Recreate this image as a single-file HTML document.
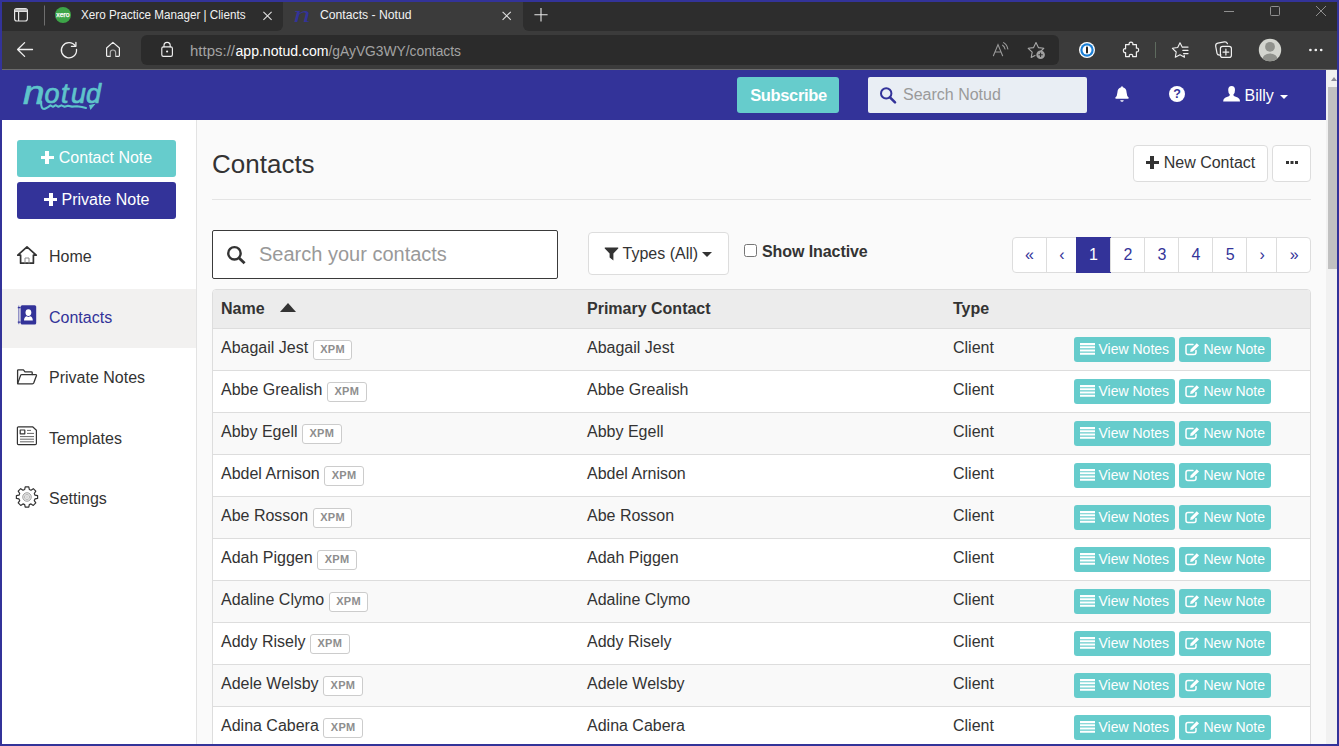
<!DOCTYPE html>
<html lang="en">
<head>
<meta charset="utf-8">
<title>Contacts - Notud</title>
<style>
*{box-sizing:border-box}
html,body{margin:0;padding:0}
body{width:1339px;height:746px;overflow:hidden;position:relative;background:#fafafa;font-family:"Liberation Sans",Arial,sans-serif;font-size:16px;color:#333;line-height:1.428571}
.abs{position:absolute}
svg{display:block;overflow:visible}
/* browser chrome */
#tabbar{left:0;top:0;width:1339px;height:31px;background:#3b3b3b}
.tabdark{top:0;height:30.5px;background:#2d2d2d}
#toolbar{left:0;top:31px;width:1339px;height:39px;background:#3b3b3b;border-bottom:1px solid #6b6b6b}
#urlbar{left:141px;top:35px;width:918px;height:30px;background:#2b2b2b;border-radius:6px}
.chrome-txt{font-family:"Liberation Sans",Arial,sans-serif;color:#fff;white-space:nowrap}
.plus{display:inline-block;position:relative;width:13px;height:13px;margin-right:5px;top:1px}
.plus:before,.plus:after{content:"";position:absolute;background:currentColor}
.plus:before{left:0;top:4.7px;width:13px;height:3.6px}
.plus:after{left:4.7px;top:0;width:3.6px;height:13px}
/* app */
#navbar{left:0;top:70px;width:1326px;height:50px;background:#333399}
#sidebar{left:0;top:120px;width:197px;height:626px;background:#fff;border-right:1px solid #e3e3e3}
#scroll{left:1326px;top:70px;width:13px;height:676px;background:#f1f1f1}
#thumb{left:1328px;top:87px;width:9px;height:182px;background:#c1c1c1}
.btn{position:absolute;border-radius:4px;text-align:center;white-space:nowrap}
.nav-item{position:absolute;left:49px;white-space:nowrap;font-size:16px;line-height:20px;color:#333}
.row{position:absolute;left:213px;width:1097px;height:42px;border-top:1px solid #ddd}
.row.odd{background:#f9f9f9}
.row.even{background:#fff}
.row span{position:absolute;white-space:nowrap;line-height:20px}
.c1{left:8px;top:9px}
.c2{left:374px;top:9px}
.c3{left:740px;top:9px}
.xpm{display:inline-block;font-style:normal;position:relative;top:1px;margin-left:4.6px;border:1px solid #ccc;border-radius:3px;background:#fff;color:#8e8e8e;font-size:11px;font-weight:bold;line-height:14px;padding:1px 6.4px 3px 6.4px;vertical-align:middle;letter-spacing:.3px}
.vb{position:absolute;top:8px;height:25px;background:#66cccc;border-radius:3px;color:#fff;font-size:14px;line-height:25px}
.vb i{position:absolute}
.vb b{position:absolute;font-weight:normal}
#frame{left:0;top:0;width:1339px;height:746px;box-shadow:inset 0 0 0 2px #333399;pointer-events:none;z-index:99}
</style>
</head>
<body>
<!-- BROWSER CHROME -->
<div id="tabbar" class="abs"></div>
<div class="abs tabdark" style="left:0;width:282.5px;border-bottom-right-radius:6px"></div><div class="abs tabdark" style="left:523px;width:816px;border-bottom-left-radius:6px"></div>
<div id="toolbar" class="abs"></div>
<div id="urlbar" class="abs"></div>
<svg class="abs" style="left:0;top:0" width="1339" height="70" viewBox="0 0 1339 70" font-family="Liberation Sans, Arial, sans-serif">
<!-- active tab flares -->
<!-- tab actions icon -->
<g fill="none" stroke="#e6e6e6" stroke-width="1.2">
<rect x="14.6" y="8.6" width="12.8" height="12.4" rx="2.2"/>
<path d="M18.6 11.5V21M14.6 11.4H27.4" />
</g>
<rect x="15" y="9" width="12" height="2.2" fill="#bdbdbd"/>
<path d="M44.5 5.5V25.5" stroke="#6e6e6e" stroke-width="1"/>
<!-- xero favicon -->
<circle cx="63" cy="15" r="8" fill="#3da548"/>
<text x="63" y="17.1" font-size="6.6" fill="#fff" stroke="#fff" stroke-width="0.25" text-anchor="middle" textLength="13.4" lengthAdjust="spacingAndGlyphs">xero</text>
<text x="81" y="19" font-size="12" fill="#f2f2f2" textLength="164.5" lengthAdjust="spacingAndGlyphs">Xero Practice Manager | Clients</text>
<path d="M263.4 11.8L271.6 19.8M271.6 11.8L263.4 19.8" stroke="#e0e0e0" stroke-width="1.1" fill="none"/>
<!-- active tab -->
<text x="293.5" y="21.8" font-size="24" font-style="italic" font-family="Liberation Serif, serif" fill="#333399" textLength="17" lengthAdjust="spacingAndGlyphs">n</text>
<text x="320" y="19" font-size="12" fill="#f2f2f2" textLength="91.5" lengthAdjust="spacingAndGlyphs">Contacts - Notud</text>
<path d="M502.6 11.8L510.8 19.8M510.8 11.8L502.6 19.8" stroke="#e0e0e0" stroke-width="1.1" fill="none"/>
<path d="M541 8V21.4M534.4 14.7H547.6" stroke="#e6e6e6" stroke-width="1.1" fill="none"/>
<!-- window controls -->
<g stroke="#8f8f8f" stroke-width="1" fill="none">
<path d="M1224 11.5H1234"/>
<rect x="1270.5" y="6.5" width="9" height="9" rx="1"/>
<path d="M1316 6L1326 16M1326 6L1316 16"/>
</g>
<!-- toolbar icons -->
<g stroke="#f0f0f0" stroke-width="1.3" fill="none" stroke-linecap="round" stroke-linejoin="round">
<path d="M32.5 49.5H17.8M24.6 42.6L17.6 49.5L24.6 56.4"/>
<path d="M76.5 49.3A7.6 7.6 0 1 1 75.3 46"/>
<path d="M75.9 42.4V46.3H71.4" />
<path d="M110.3 56.3H107.4Q106.6 56.3 106.6 55.5V48L112.9 42.4L119.4 48V55.5Q119.4 56.3 118.6 56.3H115.6" stroke-width="1.2"/><path d="M115.6 56.3V52.4Q115.6 50 112.95 50Q110.3 50 110.3 52.4V56.3" stroke="#b0b0b0" stroke-width="1.2"/>
<rect x="161.8" y="46.8" width="10.6" height="9.6" rx="1.6" stroke-width="1.15"/>
<path d="M164 46.8V45.4A3.1 3.1 0 0 1 170.2 45.4V46.8" stroke-width="1.15"/>
</g>
<circle cx="167.1" cy="51.5" r="1.1" fill="#f0f0f0"/>
<!-- url -->
<text y="55.5" font-size="14">
<tspan x="190" fill="#a3a3a3" textLength="45" lengthAdjust="spacingAndGlyphs">https://</tspan><tspan x="235.5" fill="#ffffff" textLength="93" lengthAdjust="spacingAndGlyphs">app.notud.com</tspan><tspan x="328.5" fill="#a3a3a3" textLength="132.5" lengthAdjust="spacingAndGlyphs">/gAyVG3WY/contacts</tspan>
</text>
<!-- read aloud -->
<g stroke="#9a9a9a" stroke-width="1.1" fill="none" stroke-linecap="round">
<path d="M993.4 55.8L998 44.6L1002.6 55.8M995 52H1001"/>
<path d="M1002.6 45.2Q1004.6 46.6 1005 49M1003.6 42.6Q1007.2 44.8 1007.8 49"/>
</g>
<!-- add favourite -->
<path d="M1036 42.6L1038.4 47.6L1043.8 48.3L1040 52L1040.6 54M1036 42.6L1033.6 47.6L1028.2 48.3L1032.2 52.2L1031.2 57.4L1035 55.4" stroke="#a8a8a8" stroke-width="1.1" fill="none" stroke-linejoin="round" stroke-linecap="round"/>
<circle cx="1040.6" cy="54.8" r="4.3" fill="#a0a0a0"/>
<path d="M1040.6 52.6V57M1038.4 54.8H1042.8" stroke="#2b2b2b" stroke-width="1"/>
<!-- 1password -->
<circle cx="1087" cy="50" r="8" fill="#fff"/>
<circle cx="1087" cy="50" r="6.7" fill="#1a7fd6"/>
<circle cx="1087" cy="50" r="4.5" fill="#fff"/>
<rect x="1086" y="46.6" width="2" height="6.8" rx="0.8" fill="#222"/>
<!-- puzzle -->
<path d="M1125.6 44.6H1129.2Q1128.6 42.2 1131 42.2Q1133.4 42.2 1132.8 44.6H1136.4V48.2Q1138.6 47.6 1138.6 50Q1138.6 52.4 1136.4 51.8V56.6H1132.6Q1133.2 54.4 1131 54.4Q1128.8 54.4 1129.4 56.6H1125.6V52.6Q1123.4 53 1123.4 50.6Q1123.4 48.2 1125.6 48.8Z" stroke="#f0f0f0" stroke-width="1.2" fill="none" stroke-linejoin="round"/>
<path d="M1155.5 42V58" stroke="#5e6b5e" stroke-width="1"/>
<!-- favourites list -->
<g stroke="#f0f0f0" stroke-width="1.2" fill="none" stroke-linejoin="round" stroke-linecap="round">
<path d="M1182.3 47.3L1180 42.8L1177.7 47.5L1172.4 48.3L1176.2 52L1175.3 57.3L1180 54.8L1184.5 57.2L1184.1 55.2" stroke-width="1.1"/>
<path d="M1182.8 47.1H1188M1182.8 50.3H1188M1183.6 53.5H1188" stroke-width="1.25"/>
<!-- collections -->
<path d="M1220 54.6H1219.2Q1216.6 54.6 1216.4 52.4L1216.2 45.4Q1216.2 42.8 1218.8 42.6L1225.4 42.4Q1227.8 42.4 1228.2 44.6" transform="rotate(-9 1222 49)"/>
<rect x="1220.4" y="46.4" width="11" height="11" rx="2.2"/>
<path d="M1225.9 49.2V55M1223 52.1H1228.8"/>
</g>
<!-- avatar -->
<clipPath id="avc"><circle cx="1270" cy="50" r="11.2"/></clipPath>
<circle cx="1270" cy="50" r="11.2" fill="#d3d5cf"/>
<circle cx="1270" cy="46.8" r="4.9" fill="#90928d"/>
<ellipse cx="1270" cy="60" rx="7.8" ry="6.6" fill="#90928d" clip-path="url(#avc)"/>
<g fill="#f0f0f0"><circle cx="1310.4" cy="50" r="1.35"/><circle cx="1315.8" cy="50" r="1.35"/><circle cx="1321.2" cy="50" r="1.35"/></g>
</svg>

<!-- APP -->
<div id="navbar" class="abs"></div>
<svg class="abs" style="left:0;top:70px" width="1326" height="50" viewBox="0 70 1326 50" font-family="Liberation Sans, Arial, sans-serif">
<!-- logo -->
<text y="102.5" font-size="27" font-style="italic" fill="#5fc4cb" stroke="#5fc4cb" stroke-width="0.7" stroke-linejoin="round"><tspan x="23" y="104" font-size="33" textLength="21.5" lengthAdjust="spacingAndGlyphs">n</tspan><tspan x="44.5 61 71 86" y="102.5">otud</tspan></text>
<path d="M41.2 101.5Q40.6 109.8 45 108.8Q47.6 107.6 50.5 105.4L53 106.8L55.6 105.2L58.4 106.8L61.4 105.4L64.6 106.8L68 105.8L72 106.6L77 106.2L82 107L86 108" stroke="#5fc4cb" stroke-width="2.1" fill="none" stroke-linecap="round" stroke-linejoin="round"/>
<path d="M89 105L95.6 103.8L90.4 110Z" fill="#5fc4cb"/>
<!-- search icon -->
</svg>
<div class="btn" style="left:737px;top:77px;width:102px;height:36px;background:#66cccc;color:#fff;font-weight:bold;font-size:16.5px;line-height:36px;letter-spacing:-.35px;padding-left:1px;border-radius:3px">Subscribe</div>
<div class="abs" style="left:868px;top:77px;width:219px;height:36px;background:#e9eef4;border-radius:2px"></div>
<svg class="abs" style="left:879px;top:85.8px" width="18" height="18" viewBox="0 0 18 18"><circle cx="7.2" cy="7.4" r="5.2" fill="none" stroke="#333399" stroke-width="2"/><path d="M11 11.4L16 16.4" stroke="#333399" stroke-width="2.6" stroke-linecap="round"/></svg>
<div class="abs" style="left:903px;top:84px;font-size:16px;line-height:22px;color:#9a9a9a;white-space:nowrap">Search Notud</div>
<!-- bell -->
<svg class="abs" style="left:1113px;top:85px" width="18" height="18" viewBox="0 0 18 18"><path d="M9 1.2Q9.9 1.2 9.9 2.2Q13.4 3 13.6 7.4Q13.8 11.2 15.8 12.8Q15.8 13.8 14.8 13.8H3.2Q2.2 13.8 2.2 12.8Q4.2 11.2 4.4 7.4Q4.6 3 8.1 2.2Q8.1 1.2 9 1.2Z" fill="#fff"/><path d="M7.2 15.2H10.8Q10.4 16.8 9 16.8Q7.6 16.8 7.2 15.2Z" fill="#fff"/></svg>
<!-- help -->
<svg class="abs" style="left:1168px;top:85px" width="18" height="18" viewBox="0 0 18 18"><circle cx="9" cy="9" r="8" fill="#fff"/><text x="9" y="13.4" font-size="12.5" font-weight="bold" font-family="Liberation Sans, Arial, sans-serif" text-anchor="middle" fill="#333399">?</text></svg>
<!-- user -->
<svg class="abs" style="left:1223px;top:85px" width="18" height="18" viewBox="0 0 18 18"><path d="M8.6 1Q12 1 12 5Q12 8.2 10.4 9.6Q10.2 10.8 11.4 11.3Q15.4 12.6 16.4 14Q17 15.2 17 16.6H0.2Q0.2 15.2 0.8 14Q1.8 12.6 5.8 11.3Q7 10.8 6.8 9.6Q5.2 8.2 5.2 5Q5.2 1 8.6 1Z" fill="#fff"/></svg>
<div class="abs" style="left:1244.5px;top:85px;font-size:16px;line-height:22px;color:#fff;white-space:nowrap">Billy</div>
<div class="abs" style="left:1280px;top:95px;width:0;height:0;border-left:4px solid transparent;border-right:4px solid transparent;border-top:4px solid #fff"></div>

<div id="sidebar" class="abs"></div>
<div class="btn" style="left:17px;top:140px;width:159px;height:37px;background:#66cccc;color:#fff;font-size:16px;line-height:35px;border-radius:3px"><span class="plus"></span>Contact Note</div>
<div class="btn" style="left:17px;top:182px;width:159px;height:37px;background:#333399;color:#fff;font-size:16px;line-height:35px;border-radius:3px;padding-left:1px"><span class="plus" style="margin-right:4px"></span>Private Note</div>
<div class="abs" style="left:2px;top:289px;width:194px;height:59px;background:#f2f1f0"></div>
<!-- home icon -->
<svg class="abs" style="left:16px;top:245px" width="22" height="20" viewBox="0 0 22 20" fill="none" stroke="#333" stroke-width="1.7" stroke-linejoin="round" stroke-linecap="round"><path d="M1.8 10.2L11 1.8L20.2 10.2H17.4V18.2H4.6V10.2Z"/><path d="M9 18.2V13H13V18.2" stroke="#8a8a8a" stroke-width="1"/></svg>
<div class="nav-item" style="top:247px">Home</div>
<!-- contacts icon -->
<svg class="abs" style="left:17px;top:304px" width="20" height="22" viewBox="0 0 20 22"><rect x="3.6" y="1.2" width="15.6" height="19.4" rx="1.6" fill="#333399"/><path d="M1.8 1.6V20.2" stroke="#6a6ab5" stroke-width="1"/><path d="M0.8 3.6H3.6M0.8 18.2H3.6" stroke="#333399" stroke-width="1.2"/><ellipse cx="11.4" cy="8.6" rx="2.9" ry="3.4" fill="#fff"/><path d="M7 16.6Q7 13 9.6 12.2L11.4 13L13.2 12.2Q15.8 13 15.8 16.6Z" fill="#fff"/></svg>
<div class="nav-item" style="top:308px;color:#333399">Contacts</div>
<!-- folder icon -->
<svg class="abs" style="left:16px;top:367.6px" width="22" height="18" viewBox="0 0 22 18" fill="none" stroke="#333" stroke-width="1.3" stroke-linejoin="round" stroke-linecap="round"><path d="M1.6 15.6V2.6Q1.6 1.8 2.4 1.8H7.4L9 3.8H15.4Q16.2 3.8 16.2 4.6V6.6"/><path d="M1.6 15.6L4.6 7.4Q4.9 6.6 5.8 6.6H19.6Q20.8 6.6 20.4 7.8L17.8 14.8Q17.4 15.8 16.4 15.8H2Q1.6 15.8 1.6 15.6Z"/></svg>
<div class="nav-item" style="top:368px">Private Notes</div>
<!-- templates icon -->
<svg class="abs" style="left:16px;top:425px" width="22" height="22" viewBox="0 0 22 22" fill="none" stroke="#333" stroke-width="1.2" stroke-linejoin="round"><path d="M2.4 1.8H16.6L20.4 5.2V18.4Q20.4 19.6 19.2 19.6H2.4Q1.4 19.6 1.4 18.4V2.8Q1.4 1.8 2.4 1.8Z"/><rect x="4.2" y="5" width="4.6" height="3.8"/><path d="M11 5.4H15M11 8.4H18M4 11.6H18M4 14.2H18M4 16.8H18" stroke-width="1" stroke="#666"/></svg>
<div class="nav-item" style="top:428.5px">Templates</div>
<!-- settings icon -->
<svg class="abs" style="left:16px;top:486px" width="22" height="22" viewBox="0 0 22 22" fill="none" stroke="#333" stroke-width="1.2" stroke-linejoin="round"><path d="M9.2 1.6H12.8L13.3 4.3L15 5L17.3 3.5L19.8 6L18.3 8.3L19 10L21.6 10.5V13.2L19 13.7L18.3 15.4L19.8 17.7L17.3 20.2L15 18.7L13.3 19.4L12.8 22H9.2L8.7 19.4L7 18.7L4.7 20.2L2.2 17.7L3.7 15.4L3 13.7L0.4 13.2V10.5L3 10L3.7 8.3L2.2 6L4.7 3.5L7 5L8.7 4.3Z" transform="translate(0 -0.8)"/><circle cx="11" cy="11" r="4.2" stroke="#777" stroke-width="0.8"/><circle cx="11" cy="11" r="2.6" stroke="#999" stroke-width="0.7"/><circle cx="11" cy="11" r="1.2" stroke="#aaa" stroke-width="0.6"/></svg>
<div class="nav-item" style="top:489px">Settings</div>

<div class="abs" style="left:212px;top:149px;font-size:26px;line-height:30px;color:#333;white-space:nowrap">Contacts</div>
<div class="btn" style="left:1133px;top:145px;width:135px;height:37px;background:#fff;border:1px solid #ddd;color:#333;font-size:16px;line-height:33px"><span class="plus" style="margin-right:5px"></span>New Contact</div>
<div class="btn" style="left:1272px;top:145px;width:39px;height:37px;background:#fff;border:1px solid #ddd"><i class="abs" style="left:13px;top:15px;width:3px;height:3px;background:#333;box-shadow:4.5px 0 0 #333,9px 0 0 #333"></i></div>
<div class="abs" style="left:212px;top:199px;width:1099px;height:1px;background:#e4e4e4"></div>
<div class="abs" style="left:212px;top:230px;width:346px;height:49px;background:#fff;border:1px solid #3a3a3a;border-radius:2px"></div>
<svg class="abs" style="left:226px;top:245px" width="20" height="20" viewBox="0 0 20 20"><circle cx="8.45" cy="8.35" r="6.2" fill="none" stroke="#333" stroke-width="2.4"/><path d="M12.8 12.8L18.6 18.2" stroke="#333" stroke-width="2.9"/></svg>
<div class="abs" style="left:259px;top:239.5px;font-size:20px;line-height:28px;color:#999;white-space:nowrap">Search your contacts</div>
<div class="btn" style="left:588px;top:232px;width:141px;height:43px;background:#fff;border:1px solid #ddd"></div>
<svg class="abs" style="left:604px;top:247px" width="15" height="14" viewBox="0 0 15 14"><path d="M1 0.6H14Q14.6 0.8 14.2 1.4L9.4 6.6V13.4L5.6 10.4V6.6L0.8 1.4Q0.4 0.8 1 0.6Z" fill="#333"/></svg>
<div class="abs" style="left:622.5px;top:243px;font-size:16px;line-height:22px;color:#333;white-space:nowrap">Types (All)</div>
<div class="abs" style="left:702px;top:252px;width:0;height:0;border-left:5px solid transparent;border-right:5px solid transparent;border-top:5px solid #333"></div>
<div class="abs" style="left:744px;top:244px;width:13px;height:13px;background:#fff;border:1px solid #767676;border-radius:2.5px"></div>
<div class="abs" style="left:762px;top:241px;letter-spacing:-.08px;font-size:16px;font-weight:bold;line-height:22px;color:#333;white-space:nowrap">Show Inactive</div>
<div class="abs" style="left:1012px;top:237px;width:299px;height:36px;background:#fff;border:1px solid #ddd;border-radius:4px"></div>
<div class="abs" style="left:1012px;top:238px;width:35px;height:34px;color:#333399;font-size:16px;line-height:34px;text-align:center">«</div>
<div class="abs" style="left:1046px;top:238px;width:31px;height:34px;border-left:1px solid #ddd;color:#333399;font-size:16px;line-height:34px;text-align:center">‹</div>
<div class="abs" style="left:1076px;top:237px;width:35px;height:36px;background:#333399;color:#fff;font-size:16px;line-height:36px;text-align:center">1</div>
<div class="abs" style="left:1110px;top:238px;width:35px;height:34px;border-left:1px solid #ddd;color:#333399;font-size:16px;line-height:34px;text-align:center">2</div>
<div class="abs" style="left:1144px;top:238px;width:35px;height:34px;border-left:1px solid #ddd;color:#333399;font-size:16px;line-height:34px;text-align:center">3</div>
<div class="abs" style="left:1178px;top:238px;width:35px;height:34px;border-left:1px solid #ddd;color:#333399;font-size:16px;line-height:34px;text-align:center">4</div>
<div class="abs" style="left:1212.3px;top:238px;width:35px;height:34px;border-left:1px solid #ddd;color:#333399;font-size:16px;line-height:34px;text-align:center">5</div>
<div class="abs" style="left:1246.2px;top:238px;width:31px;height:34px;border-left:1px solid #ddd;color:#333399;font-size:16px;line-height:34px;text-align:center">›</div>
<div class="abs" style="left:1276.3px;top:238px;width:34.7px;height:34px;border-left:1px solid #ddd;color:#333399;font-size:16px;line-height:34px;text-align:center">»</div>
<div class="abs" style="left:212px;top:289px;width:1099px;height:460px;border:1px solid #ddd;border-radius:4px 4px 0 0;background:#fff"></div>
<div class="abs" style="left:213px;top:290px;width:1097px;height:38px;background:#ececec;border-radius:3px 3px 0 0"></div>
<div class="abs" style="left:221px;top:298px;font-size:16px;font-weight:bold;line-height:22px;color:#333;white-space:nowrap">Name</div>
<div class="abs" style="left:587px;top:298px;font-size:16px;font-weight:bold;line-height:22px;color:#333;white-space:nowrap">Primary Contact</div>
<div class="abs" style="left:953px;top:298px;font-size:16px;font-weight:bold;line-height:22px;color:#333;white-space:nowrap">Type</div>
<div class="abs" style="left:279.5px;top:303px;width:0;height:0;border-left:8px solid transparent;border-right:8px solid transparent;border-bottom:9px solid #333"></div>
<div class="row odd" style="top:328px"><span class="c1">Abagail Jest<em class="xpm">XPM</em></span><span class="c2">Abagail Jest</span><span class="c3">Client</span><div class="vb" style="left:861px;width:101px"><svg class="abs" style="left:6px;top:6px" width="15" height="12" viewBox="0 0 15 12"><path d="M0 1.1H15M0 4.3H15M0 7.5H15M0 10.7H15" stroke="#fff" stroke-width="2.1"/></svg><b style="left:24.5px">View Notes</b></div><div class="vb" style="left:966px;width:92px"><svg class="abs" style="left:6px;top:5px" width="15" height="14" viewBox="0 0 15 14" fill="none" stroke="#fff"><path d="M11 8.6V10.6Q11 12.6 9 12.6H3Q1 12.6 1 10.6V4.6Q1 2.6 3 2.6H8" stroke-width="1.5" stroke-linecap="round"/><path d="M5.6 7.4L11.8 1.2L14 3.4L7.8 9.6L5.2 10Z" fill="#fff" stroke="none"/></svg><b style="left:24.5px">New Note</b></div></div>
<div class="row even" style="top:370px"><span class="c1">Abbe Grealish<em class="xpm">XPM</em></span><span class="c2">Abbe Grealish</span><span class="c3">Client</span><div class="vb" style="left:861px;width:101px"><svg class="abs" style="left:6px;top:6px" width="15" height="12" viewBox="0 0 15 12"><path d="M0 1.1H15M0 4.3H15M0 7.5H15M0 10.7H15" stroke="#fff" stroke-width="2.1"/></svg><b style="left:24.5px">View Notes</b></div><div class="vb" style="left:966px;width:92px"><svg class="abs" style="left:6px;top:5px" width="15" height="14" viewBox="0 0 15 14" fill="none" stroke="#fff"><path d="M11 8.6V10.6Q11 12.6 9 12.6H3Q1 12.6 1 10.6V4.6Q1 2.6 3 2.6H8" stroke-width="1.5" stroke-linecap="round"/><path d="M5.6 7.4L11.8 1.2L14 3.4L7.8 9.6L5.2 10Z" fill="#fff" stroke="none"/></svg><b style="left:24.5px">New Note</b></div></div>
<div class="row odd" style="top:412px"><span class="c1">Abby Egell<em class="xpm">XPM</em></span><span class="c2">Abby Egell</span><span class="c3">Client</span><div class="vb" style="left:861px;width:101px"><svg class="abs" style="left:6px;top:6px" width="15" height="12" viewBox="0 0 15 12"><path d="M0 1.1H15M0 4.3H15M0 7.5H15M0 10.7H15" stroke="#fff" stroke-width="2.1"/></svg><b style="left:24.5px">View Notes</b></div><div class="vb" style="left:966px;width:92px"><svg class="abs" style="left:6px;top:5px" width="15" height="14" viewBox="0 0 15 14" fill="none" stroke="#fff"><path d="M11 8.6V10.6Q11 12.6 9 12.6H3Q1 12.6 1 10.6V4.6Q1 2.6 3 2.6H8" stroke-width="1.5" stroke-linecap="round"/><path d="M5.6 7.4L11.8 1.2L14 3.4L7.8 9.6L5.2 10Z" fill="#fff" stroke="none"/></svg><b style="left:24.5px">New Note</b></div></div>
<div class="row even" style="top:454px"><span class="c1">Abdel Arnison<em class="xpm">XPM</em></span><span class="c2">Abdel Arnison</span><span class="c3">Client</span><div class="vb" style="left:861px;width:101px"><svg class="abs" style="left:6px;top:6px" width="15" height="12" viewBox="0 0 15 12"><path d="M0 1.1H15M0 4.3H15M0 7.5H15M0 10.7H15" stroke="#fff" stroke-width="2.1"/></svg><b style="left:24.5px">View Notes</b></div><div class="vb" style="left:966px;width:92px"><svg class="abs" style="left:6px;top:5px" width="15" height="14" viewBox="0 0 15 14" fill="none" stroke="#fff"><path d="M11 8.6V10.6Q11 12.6 9 12.6H3Q1 12.6 1 10.6V4.6Q1 2.6 3 2.6H8" stroke-width="1.5" stroke-linecap="round"/><path d="M5.6 7.4L11.8 1.2L14 3.4L7.8 9.6L5.2 10Z" fill="#fff" stroke="none"/></svg><b style="left:24.5px">New Note</b></div></div>
<div class="row odd" style="top:496px"><span class="c1">Abe Rosson<em class="xpm">XPM</em></span><span class="c2">Abe Rosson</span><span class="c3">Client</span><div class="vb" style="left:861px;width:101px"><svg class="abs" style="left:6px;top:6px" width="15" height="12" viewBox="0 0 15 12"><path d="M0 1.1H15M0 4.3H15M0 7.5H15M0 10.7H15" stroke="#fff" stroke-width="2.1"/></svg><b style="left:24.5px">View Notes</b></div><div class="vb" style="left:966px;width:92px"><svg class="abs" style="left:6px;top:5px" width="15" height="14" viewBox="0 0 15 14" fill="none" stroke="#fff"><path d="M11 8.6V10.6Q11 12.6 9 12.6H3Q1 12.6 1 10.6V4.6Q1 2.6 3 2.6H8" stroke-width="1.5" stroke-linecap="round"/><path d="M5.6 7.4L11.8 1.2L14 3.4L7.8 9.6L5.2 10Z" fill="#fff" stroke="none"/></svg><b style="left:24.5px">New Note</b></div></div>
<div class="row even" style="top:538px"><span class="c1">Adah Piggen<em class="xpm">XPM</em></span><span class="c2">Adah Piggen</span><span class="c3">Client</span><div class="vb" style="left:861px;width:101px"><svg class="abs" style="left:6px;top:6px" width="15" height="12" viewBox="0 0 15 12"><path d="M0 1.1H15M0 4.3H15M0 7.5H15M0 10.7H15" stroke="#fff" stroke-width="2.1"/></svg><b style="left:24.5px">View Notes</b></div><div class="vb" style="left:966px;width:92px"><svg class="abs" style="left:6px;top:5px" width="15" height="14" viewBox="0 0 15 14" fill="none" stroke="#fff"><path d="M11 8.6V10.6Q11 12.6 9 12.6H3Q1 12.6 1 10.6V4.6Q1 2.6 3 2.6H8" stroke-width="1.5" stroke-linecap="round"/><path d="M5.6 7.4L11.8 1.2L14 3.4L7.8 9.6L5.2 10Z" fill="#fff" stroke="none"/></svg><b style="left:24.5px">New Note</b></div></div>
<div class="row odd" style="top:580px"><span class="c1">Adaline Clymo<em class="xpm">XPM</em></span><span class="c2">Adaline Clymo</span><span class="c3">Client</span><div class="vb" style="left:861px;width:101px"><svg class="abs" style="left:6px;top:6px" width="15" height="12" viewBox="0 0 15 12"><path d="M0 1.1H15M0 4.3H15M0 7.5H15M0 10.7H15" stroke="#fff" stroke-width="2.1"/></svg><b style="left:24.5px">View Notes</b></div><div class="vb" style="left:966px;width:92px"><svg class="abs" style="left:6px;top:5px" width="15" height="14" viewBox="0 0 15 14" fill="none" stroke="#fff"><path d="M11 8.6V10.6Q11 12.6 9 12.6H3Q1 12.6 1 10.6V4.6Q1 2.6 3 2.6H8" stroke-width="1.5" stroke-linecap="round"/><path d="M5.6 7.4L11.8 1.2L14 3.4L7.8 9.6L5.2 10Z" fill="#fff" stroke="none"/></svg><b style="left:24.5px">New Note</b></div></div>
<div class="row even" style="top:622px"><span class="c1">Addy Risely<em class="xpm">XPM</em></span><span class="c2">Addy Risely</span><span class="c3">Client</span><div class="vb" style="left:861px;width:101px"><svg class="abs" style="left:6px;top:6px" width="15" height="12" viewBox="0 0 15 12"><path d="M0 1.1H15M0 4.3H15M0 7.5H15M0 10.7H15" stroke="#fff" stroke-width="2.1"/></svg><b style="left:24.5px">View Notes</b></div><div class="vb" style="left:966px;width:92px"><svg class="abs" style="left:6px;top:5px" width="15" height="14" viewBox="0 0 15 14" fill="none" stroke="#fff"><path d="M11 8.6V10.6Q11 12.6 9 12.6H3Q1 12.6 1 10.6V4.6Q1 2.6 3 2.6H8" stroke-width="1.5" stroke-linecap="round"/><path d="M5.6 7.4L11.8 1.2L14 3.4L7.8 9.6L5.2 10Z" fill="#fff" stroke="none"/></svg><b style="left:24.5px">New Note</b></div></div>
<div class="row odd" style="top:664px"><span class="c1">Adele Welsby<em class="xpm">XPM</em></span><span class="c2">Adele Welsby</span><span class="c3">Client</span><div class="vb" style="left:861px;width:101px"><svg class="abs" style="left:6px;top:6px" width="15" height="12" viewBox="0 0 15 12"><path d="M0 1.1H15M0 4.3H15M0 7.5H15M0 10.7H15" stroke="#fff" stroke-width="2.1"/></svg><b style="left:24.5px">View Notes</b></div><div class="vb" style="left:966px;width:92px"><svg class="abs" style="left:6px;top:5px" width="15" height="14" viewBox="0 0 15 14" fill="none" stroke="#fff"><path d="M11 8.6V10.6Q11 12.6 9 12.6H3Q1 12.6 1 10.6V4.6Q1 2.6 3 2.6H8" stroke-width="1.5" stroke-linecap="round"/><path d="M5.6 7.4L11.8 1.2L14 3.4L7.8 9.6L5.2 10Z" fill="#fff" stroke="none"/></svg><b style="left:24.5px">New Note</b></div></div>
<div class="row even" style="top:706px"><span class="c1">Adina Cabera<em class="xpm">XPM</em></span><span class="c2">Adina Cabera</span><span class="c3">Client</span><div class="vb" style="left:861px;width:101px"><svg class="abs" style="left:6px;top:6px" width="15" height="12" viewBox="0 0 15 12"><path d="M0 1.1H15M0 4.3H15M0 7.5H15M0 10.7H15" stroke="#fff" stroke-width="2.1"/></svg><b style="left:24.5px">View Notes</b></div><div class="vb" style="left:966px;width:92px"><svg class="abs" style="left:6px;top:5px" width="15" height="14" viewBox="0 0 15 14" fill="none" stroke="#fff"><path d="M11 8.6V10.6Q11 12.6 9 12.6H3Q1 12.6 1 10.6V4.6Q1 2.6 3 2.6H8" stroke-width="1.5" stroke-linecap="round"/><path d="M5.6 7.4L11.8 1.2L14 3.4L7.8 9.6L5.2 10Z" fill="#fff" stroke="none"/></svg><b style="left:24.5px">New Note</b></div></div>
<div id="scroll" class="abs"></div>
<div id="thumb" class="abs"></div>
<div class="abs" style="left:1330.5px;top:77px;width:0;height:0;border-left:3.5px solid transparent;border-right:3.5px solid transparent;border-bottom:4px solid #8a8a96"></div>
<div id="frame" class="abs"></div>
</body>
</html>
